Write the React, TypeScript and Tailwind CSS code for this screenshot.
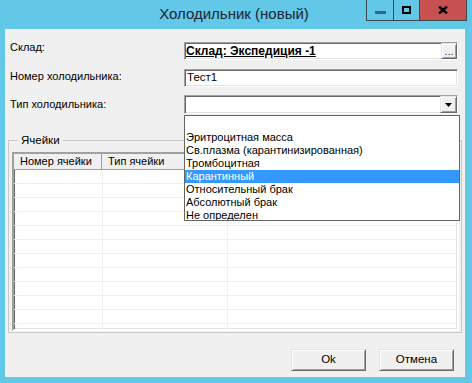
const font = { fontFamily: '"Liberation Sans", Arial, sans-serif' };

const items = [
  "Эритроцитная масса",
  "Св.плазма (карантинизированная)",
  "Тромбоцитная",
  "Карантинный",
  "Относительный брак",
  "Абсолютный брак",
  "Не определен",
];

// classic 3D edges
const sunken =
  "border border-t-[#a0a0a0] border-l-[#a0a0a0] border-b-white border-r-white shadow-[inset_1px_1px_0_#696969,inset_-1px_-1px_0_#e3e3e3]";
const raised =
  "border border-t-[#e3e3e3] border-l-[#e3e3e3] border-b-[#696969] border-r-[#696969] shadow-[inset_1px_1px_0_#ffffff,inset_-1px_-1px_0_#a0a0a0]";

function TitleBar() {
  return (
    <div className="flex h-[29px] shrink-0">
      <div className="flex-1 pl-[102px] flex items-center justify-center text-[15px] text-[#1b2430]">
        Холодильник (новый)
      </div>
      <div className="flex h-[21px] mr-[5px] border border-t-0 border-[#3a4852]">
        <div className="w-[27px] flex items-center justify-center border-r border-[#3a4852]">
          <div className="w-[11px] h-[3px] mt-[4px] bg-[#2c6b84]" />
        </div>
        <div className="w-[26px] flex items-center justify-center border-r border-[#3a4852]">
          <div className="w-[9px] h-[8px] border-2 border-black -mt-[1px]" />
        </div>
        <div className="w-[46px] flex items-center justify-center bg-[#c75050]">
          <svg width="10" height="8" viewBox="0 0 10 8" className="-mt-[1px]">
            <path d="M1 0.5 L9 7.5 M9 0.5 L1 7.5" stroke="#000" strokeWidth="2.4" />
          </svg>
        </div>
      </div>
    </div>
  );
}

function Grid() {
  const rows = Array.from({ length: 12 });
  return (
    <div className={`h-[179px] bg-white overflow-hidden flex flex-col ${sunken} border-2 border-t-[#a0a0a0] border-l-[#8a8a8a]`}>
      <div className="flex h-[16px] shrink-0 bg-[#f0f0f0] border-b border-[#a0a0a0]">
        <div className="w-[88px] pl-[6px] leading-[15px] border-r border-[#a0a0a0]">Номер ячейки</div>
        <div className="w-[126px] pl-[6px] leading-[15px] border-r border-[#a0a0a0]">Тип ячейки</div>
        <div className="flex-1" />
      </div>
      {rows.map((_, i) => (
        <div key={i} className="flex h-[14px] shrink-0 border-b border-[#f0f0f0]">
          <div className="w-[89px] border-r border-[#f0f0f0]" />
          <div className="w-[125px] border-r border-[#f0f0f0]" />
          <div className="flex-1" />
        </div>
      ))}
    </div>
  );
}

export default function App() {
  return (
    <div
      className="w-[472px] h-[383px] bg-[#63c8e8] flex flex-col text-[11px] text-black overflow-hidden"
      style={font}
    >
      <TitleBar />
      <div className="relative ml-[5px] w-[460px] h-[348px] bg-[#f0f0f0] flex flex-col">
        <div className="flex pl-[5px] pt-[13px]">
          <div className="w-[174px] leading-[14px] -mt-[2px]">Склад:</div>
          <div className={`w-[274px] h-[18px] flex items-center bg-white ${sunken}`}>
            <span className="flex-1 pl-[1px] text-[12px] font-bold underline leading-[14px]">Склад: Экспедиция -1</span>
            <div className={`w-[16px] h-[16px] bg-[#f0f0f0] flex items-end justify-center text-[11px] leading-[13px] text-[#303060] ${raised}`}>
              ...
            </div>
          </div>
        </div>
        <div className="flex pl-[5px] mt-[9px]">
          <div className="w-[174px] leading-[14px]">Номер холодильника:</div>
          <div className={`w-[274px] h-[18px] flex items-center bg-white pl-[2px] text-[11.5px] ${sunken}`}>Тест1</div>
        </div>
        <div className="flex pl-[5px] mt-[8px]">
          <div className="w-[174px] leading-[14px] mt-[2px]">Тип холодильника:</div>
          <div className={`w-[274px] h-[19px] flex items-center justify-end bg-white ${sunken}`}>
            <div className={`w-[17px] h-[17px] bg-[#f0f0f0] flex items-center justify-center ${raised}`}>
              <svg width="7" height="4" viewBox="0 0 7 4">
                <path d="M0 0 H7 L3.5 4 Z" fill="#000" />
              </svg>
            </div>
          </div>
        </div>

        <fieldset className="ml-[3px] mt-[19px] w-[454px] border border-[#c9c9c9] pl-[3px] pr-[2px] pt-[5px] pb-[1px]">
          <legend className="ml-[6px] px-[3px] leading-[14px] text-[11.5px]">Ячейки</legend>
          <Grid />
        </fieldset>

        <div className="flex justify-end gap-[13px] pr-[11px] mt-[16px]">
          <button className={`w-[75px] h-[22px] bg-[#f0f0f0] text-[11.5px] ${raised}`}>Ok</button>
          <button className={`w-[75px] h-[22px] bg-[#f0f0f0] text-[11.5px] ${raised}`}>Отмена</button>
        </div>

        {/* open combobox list */}
        <div className="absolute left-[179px] top-[86px] w-[276px] h-[106px] bg-white border border-[#646464] pt-[15px] overflow-hidden">
          {items.map((t, i) => (
            <div
              key={t}
              className={`h-[13px] leading-[13px] pl-[1px] whitespace-nowrap ${i === 3 ? "bg-[#3399ff] text-white" : ""}`}
            >
              {t}
            </div>
          ))}
        </div>
      </div>
    </div>
  );
}
